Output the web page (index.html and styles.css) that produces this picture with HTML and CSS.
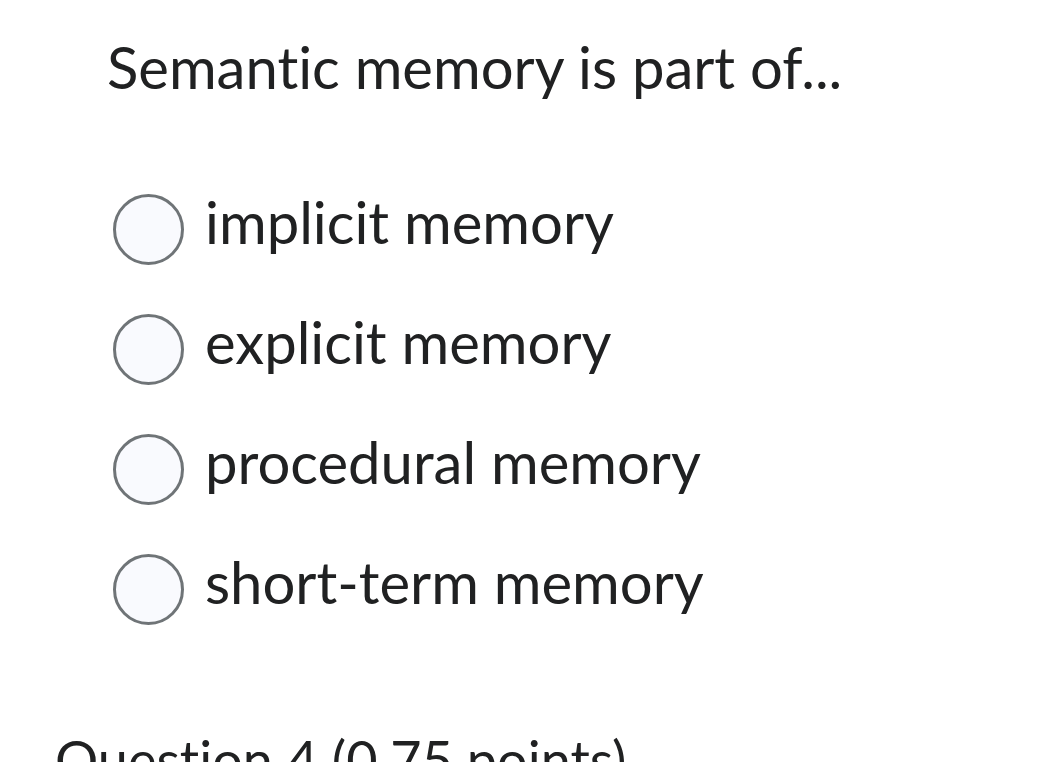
FILE: index.html
```html
<!DOCTYPE html>
<html>
<head>
<meta charset="utf-8">
<link rel="stylesheet" href="styles.css">
</head>
<body>
<div class="page">
  <h2 class="prompt">Semantic memory is part of...</h2>
  <ul class="options">
    <li class="option"><span class="radio"></span><span class="label">implicit memory</span></li>
    <li class="option"><span class="radio"></span><span class="label">explicit memory</span></li>
    <li class="option"><span class="radio"></span><span class="label">procedural memory</span></li>
    <li class="option"><span class="radio"></span><span class="label">short-term memory</span></li>
  </ul>
  <h3 class="next">Question 4 (0.75 points)</h3>
</div>
</body>
</html>
```
FILE: styles.css
```css
html, body {
  margin: 0;
  padding: 0;
  background: #ffffff;
}
body {
  font-family: Lato, "Noto Sans", sans-serif;
  font-variant-ligatures: none;
  color: #202122;
  width: 1039px;
  height: 762px;
  overflow: hidden;
}
.page {
  display: flex;
  flex-direction: column;
}
.prompt {
  margin: 0;
  padding: 27px 0 0 107px;
  font-weight: 400;
  font-size: 58px;
  line-height: 80px;
}
.options {
  list-style: none;
  margin: 0;
  padding: 87px 0 0 113px;
  display: flex;
  flex-direction: column;
  gap: 49px;
}
.option {
  display: flex;
  align-items: center;
  gap: 21px;
  height: 71px;
}
.radio {
  box-sizing: border-box;
  width: 71px;
  height: 71px;
  border-radius: 50%;
  border: 3px solid #6f7477;
  background: #f9fafe;
  flex: none;
}
.label {
  font-size: 58px;
  line-height: 70px;
  padding-bottom: 15px;
}
.next {
  margin: 0;
  padding: 105px 0 0 55px;
  font-weight: 400;
  font-size: 54px;
  line-height: 60px;
}
```
